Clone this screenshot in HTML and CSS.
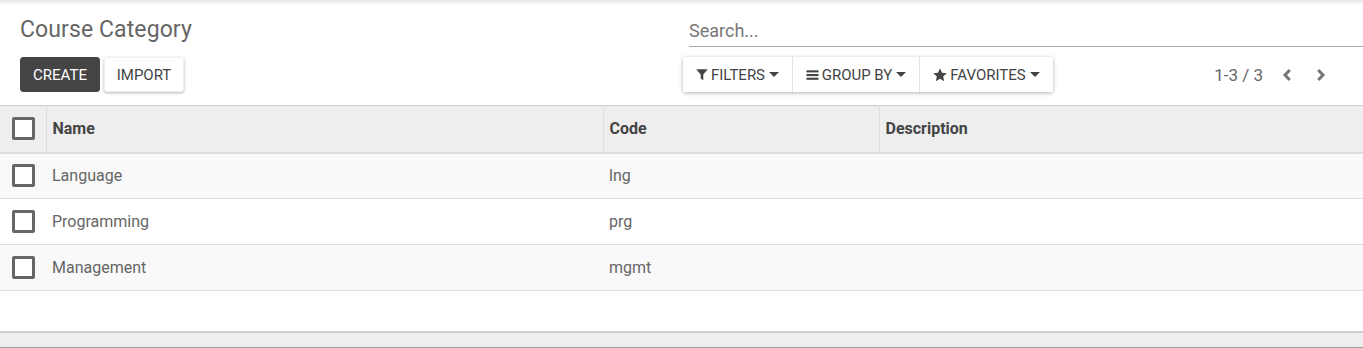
FILE: index.html
```html
<!DOCTYPE html>
<html lang="en">
<head>
  <meta charset="UTF-8" />
  <title>Course Category</title>
  <link rel="stylesheet" href="styles.css">
</head>
<body>
  <div class="top-shadow"></div>
  <div class="control-panel">
    <h2 class="breadcrumb">Course Category</h2>
    <div class="search-box">
      <input type="text" class="search-input" placeholder="Search..." />
    </div>
    <div class="cp-buttons">
      <button class="btn btn-primary">CREATE</button>
      <button class="btn btn-secondary">IMPORT</button>
    </div>
    <div class="cp-right">
      <div class="search-options">
        <button class="opt-btn opt-filters">
          <svg class="ico" viewBox="0 0 12 12" width="12" height="13"><path d="M0.3 0.8h11.4l-4.4 5.2v5.7l-2.6-1.7V6z" fill="#444"/></svg>
          FILTERS <span class="caret"></span>
        </button>
        <button class="opt-btn opt-group">
          <svg class="ico" viewBox="0 0 12 12" width="13" height="12"><rect x="0" y="1.3" width="12" height="2.1" fill="#444"/><rect x="0" y="5" width="12" height="2.1" fill="#444"/><rect x="0" y="8.7" width="12" height="2.1" fill="#444"/></svg>
          GROUP BY <span class="caret"></span>
        </button>
        <button class="opt-btn opt-fav">
          <svg class="ico" viewBox="0 0 12 12" width="14" height="14"><path d="M6 0.3l1.7 3.8 4.1.4-3.1 2.8.9 4.1L6 9.3l-3.6 2.1.9-4.1L.2 4.5l4.1-.4z" fill="#444"/></svg>
          FAVORITES <span class="caret"></span>
        </button>
      </div>
      <div class="pager">
        <span class="pager-value">1-3 / 3</span>
        <span class="pager-arrow">
          <svg viewBox="0 0 10 14" width="10" height="14"><path d="M7.8 2L3 7l4.8 5" fill="none" stroke="#777" stroke-width="3"/></svg>
        </span>
        <span class="pager-arrow">
          <svg viewBox="0 0 10 14" width="10" height="14"><path d="M2.2 2L7 7l-4.8 5" fill="none" stroke="#777" stroke-width="3"/></svg>
        </span>
      </div>
    </div>
  </div>

  <div class="list-view">
    <table class="list-table">
      <thead>
        <tr>
          <th class="col-select"><span class="checkbox"></span></th>
          <th class="col-name">Name</th>
          <th class="col-code">Code</th>
          <th>Description</th>
        </tr>
      </thead>
      <tbody>
        <tr>
          <td class="col-select"><span class="checkbox"></span></td>
          <td>Language</td>
          <td>lng</td>
          <td></td>
        </tr>
        <tr>
          <td class="col-select"><span class="checkbox"></span></td>
          <td>Programming</td>
          <td>prg</td>
          <td></td>
        </tr>
        <tr>
          <td class="col-select"><span class="checkbox"></span></td>
          <td>Management</td>
          <td>mgmt</td>
          <td></td>
        </tr>
      </tbody>
    </table>
  </div>
  <div class="list-footer"></div>
</body>
</html>
```

FILE: styles.css
```css
* {
  box-sizing: border-box;
}

body {
  margin: 0;
  background: #fff;
  color: #4c4c4c;
  font-family: Roboto, 'Noto Sans', sans-serif;
  font-size: 16px;
  height: 348px;
  overflow: hidden;
  position: relative;
}

.top-shadow {
  position: absolute;
  top: 0;
  left: 0;
  right: 0;
  height: 5px;
  background: linear-gradient(#e6e6e6, rgba(255, 255, 255, 0));
}

/* Barra de control */
.control-panel {
  display: grid;
  grid-template-columns: 663px 1fr;
  grid-template-rows: 57px 35px;
  padding: 0 0 13px 20px;
}

.breadcrumb {
  margin: 0;
  padding-top: 16px;
  font-size: 23px;
  font-weight: 400;
  color: #666;
  line-height: 28px;
  letter-spacing: 0.1px;
}

.search-box {
  padding: 20px 0 0 6px;
}

.search-input {
  width: 100%;
  border: none;
  border-bottom: 1px solid #aaa;
  padding: 0 0 4px 0;
  font-family: Roboto, sans-serif;
  font-size: 18px;
  line-height: 22px;
  color: #444;
  outline: none;
  background: transparent;
}

.search-input::placeholder {
  color: #777;
}

.cp-buttons {
  display: flex;
  gap: 4px;
}

.btn {
  height: 35px;
  padding: 0 10px;
  border-radius: 3px;
  font-family: Roboto, sans-serif;
  font-size: 15px;
  cursor: pointer;
}

.btn-primary {
  width: 80px;
  background: #444;
  color: #fff;
  border: 1px solid #444;
}

.btn-secondary {
  width: 80px;
  background: #fff;
  color: #444;
  border: 1px solid #f0f0f0;
  box-shadow: 0 1px 3px rgba(0, 0, 0, 0.3);
}

.cp-right {
  display: flex;
  align-items: center;
}

.search-options {
  display: flex;
  height: 35px;
  border-radius: 3px;
  box-shadow: 0 1px 4px rgba(0, 0, 0, 0.3);
  background: #fff;
}

.opt-btn {
  display: flex;
  align-items: center;
  justify-content: center;
  gap: 3px;
  height: 35px;
  padding: 0;
  background: #fff;
  border: none;
  border-left: 1px solid #e4e4e4;
  color: #444;
  font-family: Roboto, sans-serif;
  font-size: 15px;
  cursor: pointer;
}

.opt-filters {
  width: 109px;
  border-left: none;
  border-radius: 3px 0 0 3px;
}

.opt-group {
  width: 127px;
}

.opt-fav {
  width: 134px;
  border-radius: 0 3px 3px 0;
}

.caret {
  display: inline-block;
  width: 0;
  height: 0;
  border-left: 5px solid transparent;
  border-right: 5px solid transparent;
  border-top: 5px solid #444;
  margin-left: 1px;
}

.pager {
  margin-left: auto;
  margin-right: 25px;
  display: flex;
  align-items: center;
  height: 35px;
}

.pager-value {
  color: #666;
  font-size: 17px;
  margin-right: 7px;
}

.pager-arrow {
  width: 34px;
  display: flex;
  justify-content: center;
}

/* Lista */
.list-table {
  width: 100%;
  border-collapse: collapse;
  table-layout: fixed;
  border-top: 1px solid #ccc;
}

.list-table th {
  height: 47px;
  background: #eee;
  text-align: left;
  font-weight: 700;
  color: #444;
  padding: 0 6px;
  border-left: 1px solid #ddd;
  border-bottom: 2px solid #ddd;
}

.list-table th:first-child {
  border-left: none;
}

.list-table td {
  height: 46px;
  padding: 0 6px;
  color: #666;
  border-bottom: 1px solid #ddd;
}

.list-table tbody tr:nth-child(odd) {
  background: #f9f9f9;
}

.col-select {
  width: 46px;
  padding: 0 0 0 12px !important;
}

.col-name {
  width: 557px;
}

.col-code {
  width: 276px;
}

.checkbox {
  display: block;
  width: 23px;
  height: 23px;
  border: 3px solid #666;
  border-radius: 2px;
  background: #fff;
}

.list-footer {
  position: absolute;
  left: 0;
  right: 0;
  bottom: 0;
  height: 17px;
  background: #eee;
  border-top: 2px solid #ccc;
  border-bottom: 1px solid #999;
}
```
